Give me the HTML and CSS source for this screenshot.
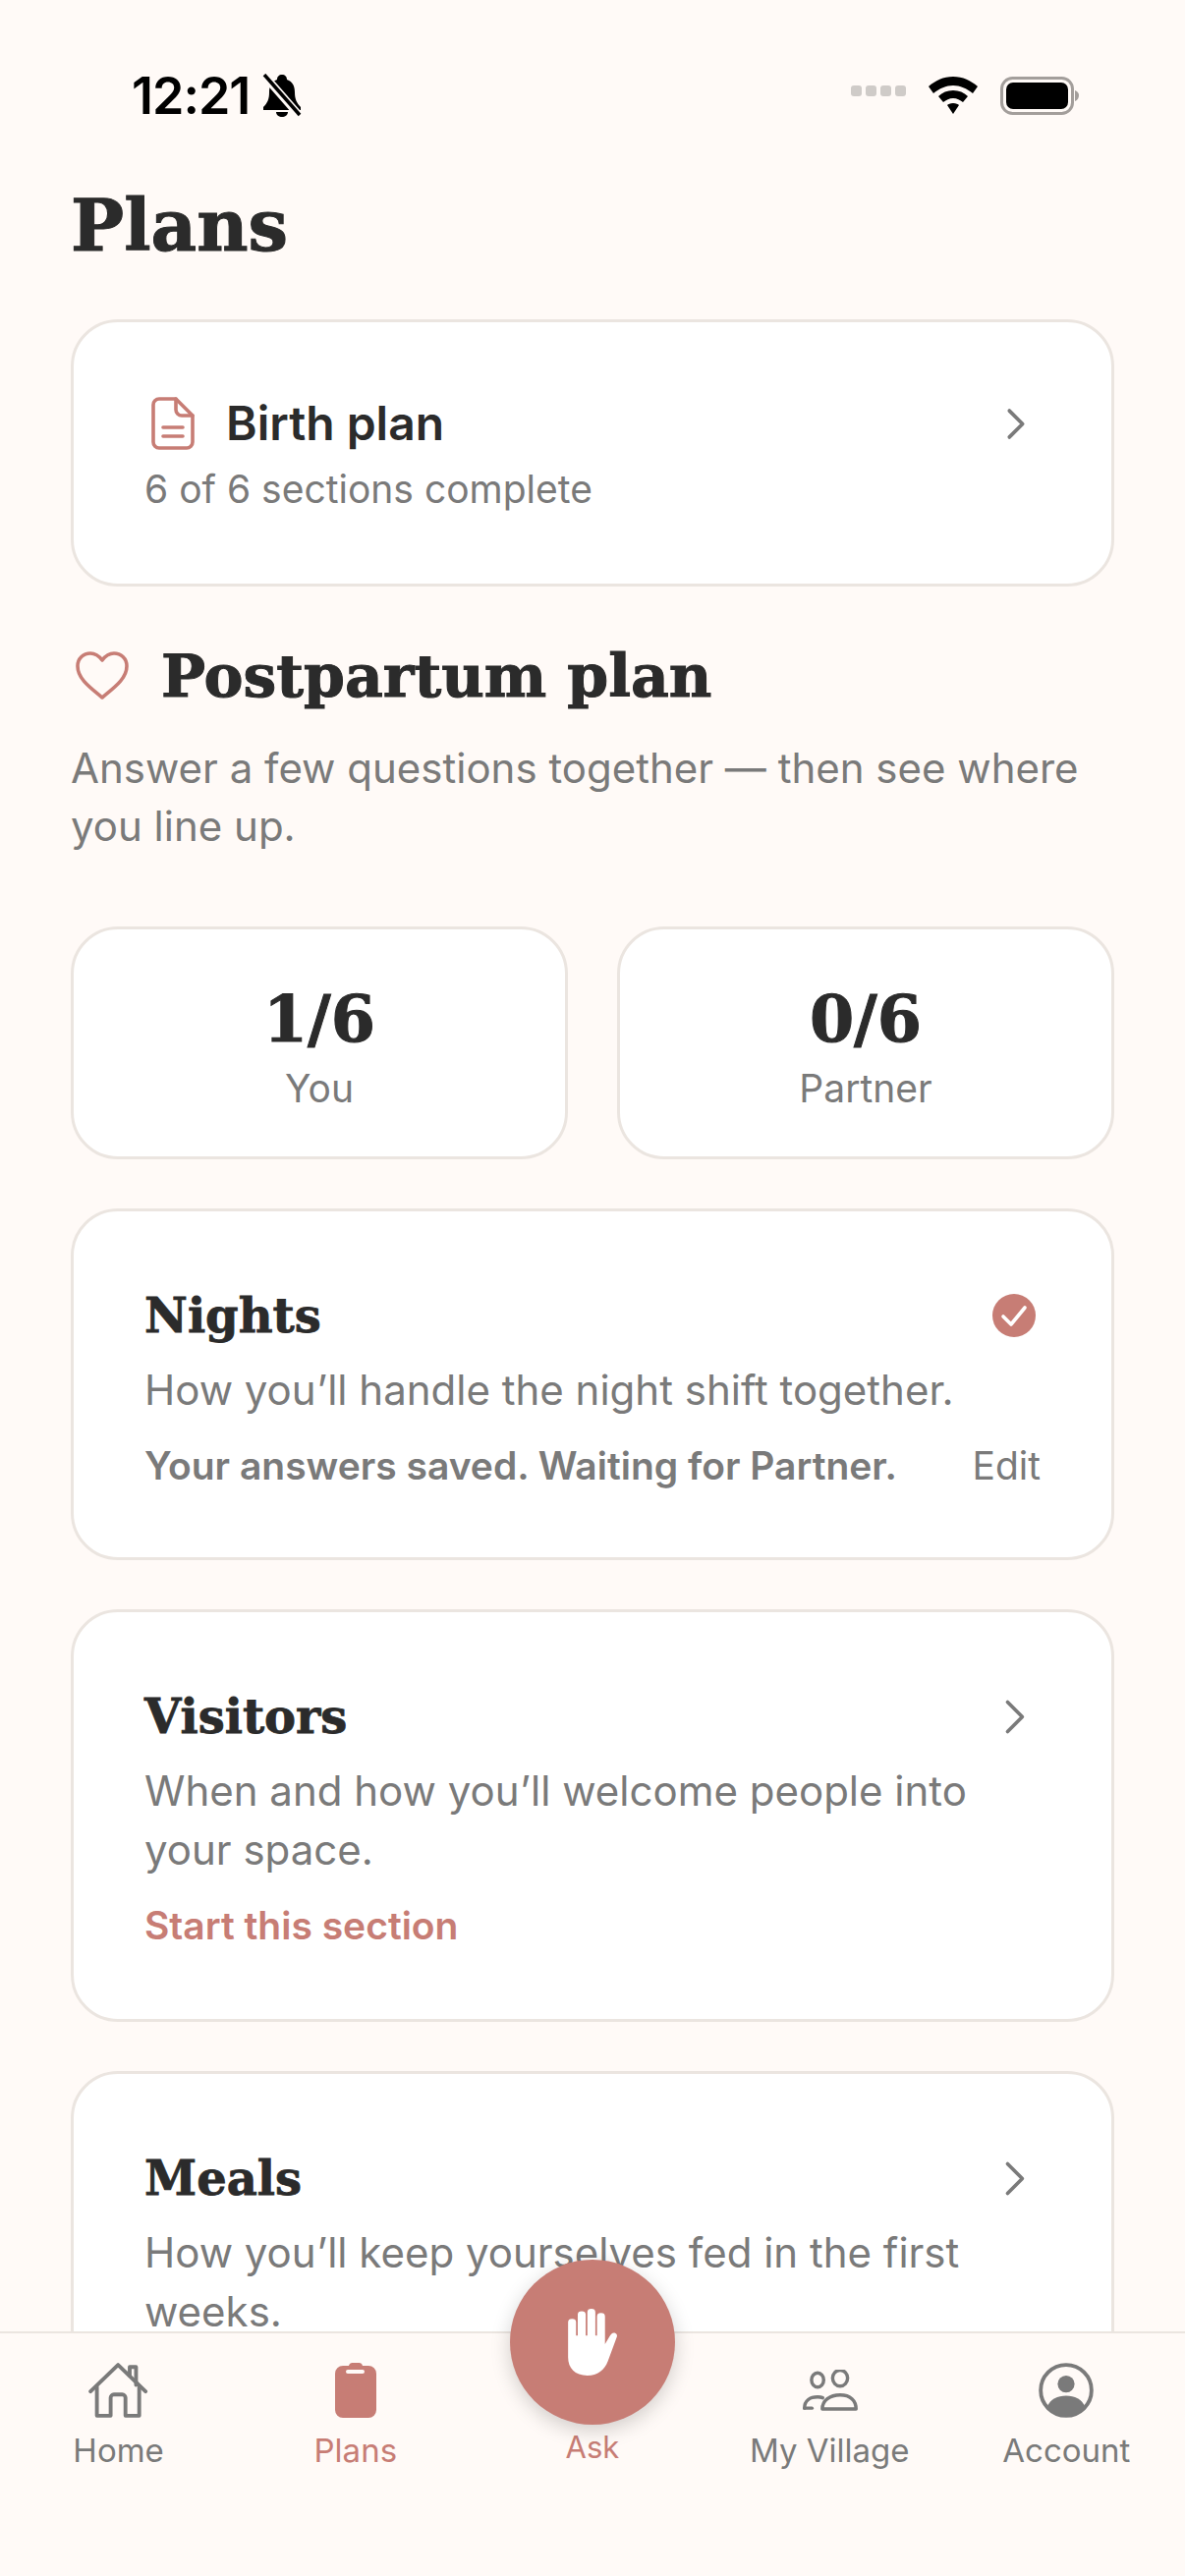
FILE: index.html
```html
<!DOCTYPE html>
<html lang="en">
<head>
    <meta charset="UTF-8">
    <meta name="viewport" content="width=device-width, initial-scale=1.0">
    <title>Plans</title>
    <link rel="stylesheet" href="styles.css">
</head>
<body>
<div class="screen">
    <div class="status-bar">
        <div class="status-left">
            <span class="time">12:21</span>
            <svg class="bell" viewBox="0 0 42 44"><path d="M21 1c3 0 5 2 5 5 6 2 8 7 8 13 0 7 2 11 6 15v3H2v-3c4-4 6-8 6-15 0-6 2-11 8-13 0-3 2-5 5-5z" fill="#000"/><path d="M15 39h12c0 3-3 5-6 5s-6-2-6-5z" fill="#000"/><path d="M4 3l34 39" stroke="#fffaf7" stroke-width="8"/><path d="M3 1l36 41" stroke="#000" stroke-width="3.5"/></svg>
        </div>
        <div class="status-right">
            <div class="signal"><i></i><i></i><i></i><i></i></div>
            <svg class="wifi" viewBox="0 0 50 38"><path d="M25 0c10 0 18 4 25 10l-5 7C39 12 32 9 25 9S11 12 5 17l-5-7C7 4 15 0 25 0z" fill="#000"/><path d="M25 14c6 0 11 2 15 6l-5 6c-3-2-6-4-10-4s-7 2-10 4l-5-6c4-4 9-6 15-6z" fill="#000"/><path d="M25 27c3 0 5 1 6 2l-6 9-6-9c1-1 3-2 6-2z" fill="#000"/></svg>
            <svg class="battery" viewBox="0 0 80 39"><rect x="1.500" y="1.500" width="72" height="36" rx="11" fill="none" stroke="#a39e9b" stroke-width="3"/><rect x="6" y="6" width="63" height="27" rx="7" fill="#000"/><path d="M76 14c3 1 4 3 4 5s-1 5-4 6z" fill="#a39e9b"/></svg>
        </div>
    </div>

    <main class="content">
        <h1 class="page-title">Plans</h1>

        <section class="card birth-card">
            <div class="card-head">
                <div class="birth-name">
                    <svg class="doc-icon" viewBox="0 0 44 54" fill="none" stroke="#c77d75" stroke-width="3.6" stroke-linecap="round" stroke-linejoin="round"><path d="M8 2h17l17 17v27a6 6 0 0 1-6 6H8a6 6 0 0 1-6-6V8a6 6 0 0 1 6-6z"/><path d="M25 2v11a6 6 0 0 0 6 6h11"/><path d="M12 31h20M12 40h20"/></svg>
                    <span>Birth plan</span>
                </div>
                <svg class="chevron small" viewBox="0 0 20 32"><path d="M3 3l13 13L3 29" fill="none" stroke="#7a7a7a" stroke-width="3.6" stroke-linecap="round" stroke-linejoin="round"/></svg>
            </div>
            <p class="card-text">6 of 6 sections complete</p>
        </section>

        <div class="plan-heading">
            <svg class="heart" viewBox="0 0 56 50"><path d="M28 47C16 37 3 28 3 15 3 7 9 2 16 2c5 0 9 3 12 7 3-4 7-7 12-7 7 0 13 5 13 13 0 13-13 22-25 32z" fill="none" stroke="#c77d75" stroke-width="3.6" stroke-linejoin="round"/></svg>
            <h2>Postpartum plan</h2>
        </div>
        <p class="plan-intro">Answer a few questions together — then see where you line up.</p>

        <div class="stats">
            <div class="card stat"><strong>1/6</strong><span>You</span></div>
            <div class="card stat"><strong>0/6</strong><span>Partner</span></div>
        </div>

        <section class="card section-card">
            <div class="card-head">
                <h3>Nights</h3>
                <svg class="check" viewBox="0 0 44 44"><circle cx="22" cy="22" r="22" fill="#c77d75"/><path d="M11 23l8 8 14-17" fill="none" stroke="#fff" stroke-width="3.6" stroke-linecap="round" stroke-linejoin="round"/></svg>
            </div>
            <p class="card-text">How you’ll handle the night shift together.</p>
            <div class="card-foot">
                <span class="saved">Your answers saved. Waiting for Partner.</span>
                <span class="edit">Edit</span>
            </div>
        </section>

        <section class="card section-card">
            <div class="card-head">
                <h3>Visitors</h3>
                <svg class="chevron" viewBox="0 0 20 32"><path d="M3 3l13 13L3 29" fill="none" stroke="#7a7a7a" stroke-width="3.2" stroke-linecap="round" stroke-linejoin="round"/></svg>
            </div>
            <p class="card-text">When and how you’ll welcome people into your space.</p>
            <div class="card-foot"><span class="start">Start this section</span></div>
        </section>

        <section class="card section-card">
            <div class="card-head">
                <h3>Meals</h3>
                <svg class="chevron" viewBox="0 0 20 32"><path d="M3 3l13 13L3 29" fill="none" stroke="#7a7a7a" stroke-width="3.2" stroke-linecap="round" stroke-linejoin="round"/></svg>
            </div>
            <p class="card-text">How you’ll keep yourselves fed in the first weeks.</p>
        </section>
    </main>

    <nav class="tabbar">
        <a class="tab">
            <svg viewBox="0 0 56 52" fill="none" stroke="#7a7a7a" stroke-width="3.6" stroke-linecap="round" stroke-linejoin="round"><path d="M2 27L28 2l26 25"/><path d="M39 12V4h6v17"/><path d="M8 23v27h13V33a3 3 0 0 1 3-3h8a3 3 0 0 1 3 3v17h13V23"/></svg>
            <span>Home</span>
        </a>
        <a class="tab active">
            <svg viewBox="0 0 42 56"><path d="M14 3a4 4 0 0 1 4-3h6a4 4 0 0 1 4 3h6a8 8 0 0 1 8 8v37a8 8 0 0 1-8 8H8a8 8 0 0 1-8-8V11a8 8 0 0 1 8-8z" fill="#c77d75"/><rect x="11" y="7" width="19" height="4" rx="2" fill="#fffaf7"/></svg>
            <span>Plans</span>
        </a>
        <a class="tab ask">
            <span>Ask</span>
        </a>
        <a class="tab village">
            <svg viewBox="0 0 58 44" fill="none" stroke="#7a7a7a" stroke-width="3.6" stroke-linecap="round" stroke-linejoin="round"><ellipse cx="16" cy="11" rx="6.500" ry="7.500"/><ellipse cx="40" cy="9" rx="8" ry="8.500"/><path d="M2 41c0-8 6-12 14-12 2 0 4 .3 5.500 1"/><path d="M2 41h8"/><path d="M21 42c0-9 8-15 19-15s17 6 17 15z"/></svg>
            <span>My Village</span>
        </a>
        <a class="tab">
            <svg viewBox="0 0 52 52"><circle cx="26" cy="26" r="24" fill="none" stroke="#7a7a7a" stroke-width="3.6"/><circle cx="26" cy="20" r="8" fill="#7a7a7a"/><path d="M8 42c3-8 10-11 18-11s15 3 18 11c-4 5-11 9-18 9S12 47 8 42z" fill="#7a7a7a"/></svg>
            <span>Account</span>
        </a>
    </nav>

    <button class="fab" aria-label="Ask">
        <svg viewBox="9 0 45 70" preserveAspectRatio="none"><path d="M10 36V14a3.500 3.500 0 0 1 7 0v14h1.500V6a3.500 3.500 0 0 1 7 0v22H27V3.500a3.500 3.500 0 0 1 7 0V28h1.500V8a3.500 3.500 0 0 1 7 0v29l4-8c1.500-3 3-4.500 5-3.500s2 3 1 5.500L45 55c-3 9-9 15-18 15-11 0-17-8-17-19z" fill="#fff"/></svg>
    </button>
</div>
</body>
</html>
```

FILE: styles.css
```css
* {
    box-sizing: border-box;
}
html, body {
    margin: 0;
    padding: 0;
}
body {
    font-family: Inter, "Noto Sans", sans-serif;
    color: #2b2b2b;
    background-color: #fffaf7;
}
.screen {
    position: relative;
    display: flex;
    flex-direction: column;
    width: 1206px;
    height: 2622px;
    overflow: hidden;
    background-color: #fffaf7;
}

/* status bar */
.status-bar {
    display: flex;
    flex: none;
    justify-content: space-between;
    align-items: center;
    height: 78px;
    margin-top: 58px;
    padding: 0 108px 0 134px;
}
.status-left {
    display: flex;
    align-items: center;
    gap: 12px;
}
.time {
    font-size: 52px;
    font-weight: 600;
    color: #000;
    letter-spacing: -1px;
}
.bell {
    width: 42px;
    height: 44px;
}
.status-right {
    display: flex;
    align-items: center;
    gap: 23px;
}
.signal {
    display: flex;
    gap: 4px;
    align-self: flex-end;
    margin-bottom: 19px;
}
.signal i {
    width: 11px;
    height: 11px;
    border-radius: 3px;
    background-color: #cfcbc8;
}
.wifi {
    width: 50px;
    height: 38px;
}
.battery {
    width: 80px;
    height: 39px;
}

/* page content */
.content {
    flex: 1;
    min-height: 0;
    overflow: hidden;
    padding: 0 72px;
}
.page-title {
    margin: 45px 0 0;
    height: 98px;
    font-family: "DejaVu Serif", "Liberation Serif", serif;
    font-size: 72px;
    font-weight: 700;
    line-height: 98px;
    color: #2b2b2b;
    -webkit-text-stroke: 1px #2b2b2b;
}
.card {
    background-color: #fff;
    border: 3px solid #ebe5e0;
    border-radius: 48px;
}
.birth-card {
    height: 272px;
    margin-top: 46px;
    padding: 73px 72px 0;
}
.card-head {
    display: flex;
    justify-content: space-between;
    align-items: center;
}
.birth-name {
    display: flex;
    align-items: center;
    gap: 32px;
    padding-left: 7px;
    font-size: 48px;
    font-weight: 600;
    line-height: 60px;
}
.doc-icon {
    width: 44px;
    height: 54px;
}
.chevron {
    width: 23px;
    height: 37px;
    margin-right: 14px;
}
.chevron.small {
    width: 21px;
    height: 33px;
}
.card-text {
    margin: 0;
    font-size: 42px;
    line-height: 60px;
    color: #7a7a7a;
}
.birth-card .card-text {
    margin-top: 7px;
    font-size: 39px;
}
.plan-heading {
    display: flex;
    align-items: center;
    gap: 32px;
    margin-top: 51px;
    padding-left: 4px;
}
.heart {
    width: 56px;
    height: 50px;
}
.plan-heading h2 {
    margin: 0;
    font-family: "DejaVu Serif", "Liberation Serif", serif;
    font-size: 60px;
    font-weight: 700;
    line-height: 80px;
    -webkit-text-stroke: 1px #2b2b2b;
}
.plan-intro {
    margin: 24px 0 0;
    font-size: 42px;
    line-height: 59px;
    color: #7a7a7a;
}
.stats {
    display: grid;
    grid-template-columns: 1fr 1fr;
    gap: 50px;
    margin-top: 73px;
}
.stat {
    display: flex;
    flex-direction: column;
    align-items: center;
    height: 237px;
    padding-top: 51px;
}
.stat strong {
    font-family: "DejaVu Serif", "Liberation Serif", serif;
    font-size: 65px;
    font-weight: 700;
    line-height: 80px;
    -webkit-text-stroke: 1px #2b2b2b;
}
.stat span {
    margin-top: 6px;
    font-size: 39px;
    line-height: 50px;
    color: #7a7a7a;
}
.section-card {
    margin-top: 50px;
    padding: 81px 72px 0;
}
.section-card:nth-of-type(2) {
    height: 358px;
}
.section-card:nth-of-type(3) {
    height: 420px;
}
.section-card:nth-of-type(4) {
    height: 420px;
}
.section-card h3 {
    margin: 0;
    font-family: "DejaVu Serif", "Liberation Serif", serif;
    font-size: 48px;
    font-weight: 700;
    line-height: 50px;
    -webkit-text-stroke: 0.8px #2b2b2b;
}
.section-card .card-text {
    margin-top: 21px;
}
.check {
    width: 44px;
    height: 44px;
    margin-right: 5px;
}
.card-foot {
    display: flex;
    justify-content: space-between;
    align-items: center;
    margin-top: 22px;
    font-size: 39px;
    line-height: 50px;
}
.saved {
    font-weight: 600;
    color: #7a7a7a;
}
.edit {
    color: #7a7a7a;
}
.start {
    font-weight: 600;
    color: #c77d75;
}

/* bottom tabs */
.tabbar {
    display: grid;
    flex: none;
    grid-template-columns: repeat(5, 1fr);
    height: 249px;
    border-top: 2px solid #ebe5e0;
    background-color: #fffaf7;
}
.tab {
    display: flex;
    flex-direction: column;
    align-items: center;
    font-size: 33px;
    line-height: 44px;
    color: #7a7a7a;
}
.tab svg {
    height: 56px;
    margin-top: 30px;
}
.tab span {
    margin-top: 11px;
}
.tab.active {
    color: #c77d75;
}
.tab.ask {
    justify-content: flex-start;
    font-size: 31px;
    color: #c77d75;
}
.tab.ask span {
    margin-top: 94px;
}
.tab.village svg {
    width: 57px;
    height: 42px;
    margin-top: 37px;
}
.tab.village span {
    margin-top: 18px;
}
.fab {
    position: absolute;
    left: 519px;
    top: 2300px;
    display: flex;
    justify-content: center;
    align-items: center;
    width: 168px;
    height: 168px;
    padding: 0;
    border: none;
    border-radius: 50%;
    background-color: #c77d75;
    box-shadow: 0 6px 20px rgba(0, 0, 0, 0.18);
}
.fab svg {
    width: 52px;
    height: 68px;
}
```
